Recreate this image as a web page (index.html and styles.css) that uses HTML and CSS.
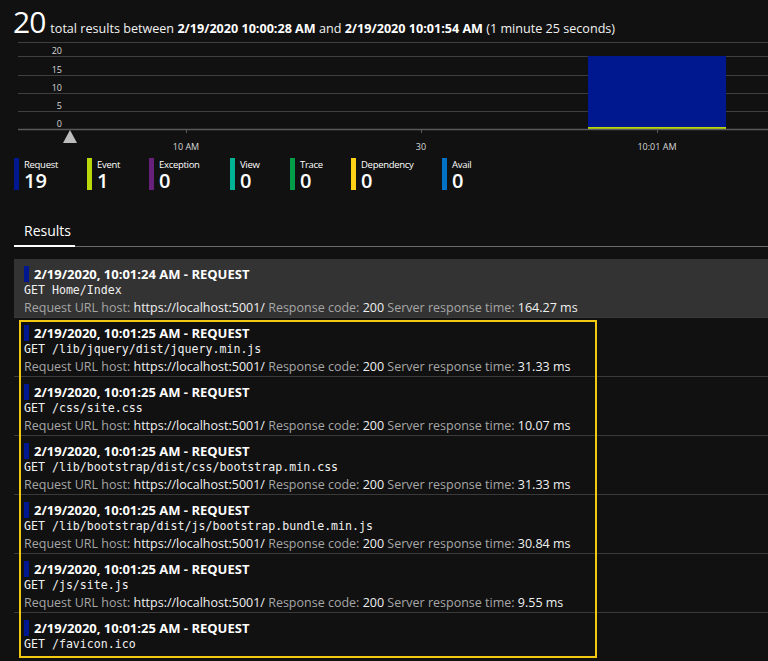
FILE: index.html
```html
<!DOCTYPE html>
<html>
<head>
<meta charset="utf-8">
<link rel="stylesheet" href="styles.css">
</head>
<body>
<div class="page">
  <header class="summary">
    <span class="summary-count">20</span>
    <span class="summary-text">total results between <b>2/19/2020 10:00:28 AM</b> and <b>2/19/2020 10:01:54 AM</b> (1 minute 25 seconds)</span>
  </header>

  <svg class="chart" width="768" height="112" viewBox="0 0 768 112">
    <g stroke="#3f3f3f" stroke-width="1">
      <line x1="18" y1="0.5" x2="768" y2="0.5"/>
      <line x1="18" y1="14.5" x2="768" y2="14.5"/>
      <line x1="18" y1="33.5" x2="768" y2="33.5"/>
      <line x1="18" y1="51.5" x2="768" y2="51.5"/>
      <line x1="18" y1="69.5" x2="768" y2="69.5"/>
    </g>
    <rect x="588" y="14" width="138" height="73" fill="#00188f"/>
    <rect x="588" y="85" width="138" height="2" fill="#bad80a"/>
    <line x1="18" y1="87.5" x2="768" y2="87.5" stroke="#5a5a5a" stroke-width="1.5"/>
    <g stroke="#5a5a5a" stroke-width="1">
      <line x1="186.5" y1="88" x2="186.5" y2="91"/>
      <line x1="421.5" y1="88" x2="421.5" y2="91"/>
      <line x1="657.5" y1="88" x2="657.5" y2="91"/>
    </g>
    <g class="axis-label" text-anchor="end">
      <text x="62" y="12">20</text>
      <text x="62" y="31">15</text>
      <text x="62" y="49">10</text>
      <text x="62" y="67">5</text>
      <text x="62" y="85">0</text>
    </g>
    <g class="axis-label" text-anchor="middle">
      <text x="186" y="108">10 AM</text>
      <text x="421" y="108">30</text>
      <text x="657" y="108">10:01 AM</text>
    </g>
    <polygon points="70,88 63,101 77,101" fill="#bdbdbd"/>
  </svg>

  <div class="legend">
    <div class="legend-item"><span class="legend-bar c-request"></span><div><div class="legend-label">Request</div><div class="legend-value">19</div></div></div>
    <div class="legend-item"><span class="legend-bar c-event"></span><div><div class="legend-label">Event</div><div class="legend-value">1</div></div></div>
    <div class="legend-item"><span class="legend-bar c-exception"></span><div><div class="legend-label">Exception</div><div class="legend-value">0</div></div></div>
    <div class="legend-item"><span class="legend-bar c-view"></span><div><div class="legend-label">View</div><div class="legend-value">0</div></div></div>
    <div class="legend-item"><span class="legend-bar c-trace"></span><div><div class="legend-label">Trace</div><div class="legend-value">0</div></div></div>
    <div class="legend-item"><span class="legend-bar c-dependency"></span><div><div class="legend-label">Dependency</div><div class="legend-value">0</div></div></div>
    <div class="legend-item"><span class="legend-bar c-avail"></span><div><div class="legend-label">Avail</div><div class="legend-value">0</div></div></div>
  </div>

  <nav class="tabs">
    <span class="tab tab-active">Results</span>
  </nav>

  <div class="results">
    <div class="result result-selected">
      <div class="result-title"><span class="result-marker"></span>2/19/2020, 10:01:24 AM - REQUEST</div>
      <div class="result-name">GET Home/Index</div>
      <div class="result-meta">Request URL host: <span class="val">https://localhost:5001/</span> Response code: <span class="val">200</span> Server response time: <span class="val">164.27 ms</span></div>
    </div>
    <div class="result">
      <div class="result-title"><span class="result-marker"></span>2/19/2020, 10:01:25 AM - REQUEST</div>
      <div class="result-name">GET /lib/jquery/dist/jquery.min.js</div>
      <div class="result-meta">Request URL host: <span class="val">https://localhost:5001/</span> Response code: <span class="val">200</span> Server response time: <span class="val">31.33 ms</span></div>
    </div>
    <div class="result">
      <div class="result-title"><span class="result-marker"></span>2/19/2020, 10:01:25 AM - REQUEST</div>
      <div class="result-name">GET /css/site.css</div>
      <div class="result-meta">Request URL host: <span class="val">https://localhost:5001/</span> Response code: <span class="val">200</span> Server response time: <span class="val">10.07 ms</span></div>
    </div>
    <div class="result">
      <div class="result-title"><span class="result-marker"></span>2/19/2020, 10:01:25 AM - REQUEST</div>
      <div class="result-name">GET /lib/bootstrap/dist/css/bootstrap.min.css</div>
      <div class="result-meta">Request URL host: <span class="val">https://localhost:5001/</span> Response code: <span class="val">200</span> Server response time: <span class="val">31.33 ms</span></div>
    </div>
    <div class="result">
      <div class="result-title"><span class="result-marker"></span>2/19/2020, 10:01:25 AM - REQUEST</div>
      <div class="result-name">GET /lib/bootstrap/dist/js/bootstrap.bundle.min.js</div>
      <div class="result-meta">Request URL host: <span class="val">https://localhost:5001/</span> Response code: <span class="val">200</span> Server response time: <span class="val">30.84 ms</span></div>
    </div>
    <div class="result">
      <div class="result-title"><span class="result-marker"></span>2/19/2020, 10:01:25 AM - REQUEST</div>
      <div class="result-name">GET /js/site.js</div>
      <div class="result-meta">Request URL host: <span class="val">https://localhost:5001/</span> Response code: <span class="val">200</span> Server response time: <span class="val">9.55 ms</span></div>
    </div>
    <div class="result">
      <div class="result-title"><span class="result-marker"></span>2/19/2020, 10:01:25 AM - REQUEST</div>
      <div class="result-name">GET /favicon.ico</div>
    </div>
    <div class="highlight"></div>
  </div>
</div>
</body>
</html>
```

FILE: styles.css
```css
html, body {
  margin: 0;
  padding: 0;
  background: #111111;
  overflow: hidden;
}

.page {
  width: 768px;
  height: 661px;
  overflow: hidden;
  font-family: "Open Sans", "Noto Sans", sans-serif;
  color: #ffffff;
}

.summary {
  height: 42px;
  padding-left: 13px;
  display: flex;
  align-items: baseline;
  gap: 5px;
  box-sizing: border-box;
  padding-top: 5px;
}

.summary-count {
  font-size: 30px;
  line-height: 34px;
  letter-spacing: -1px;
}

.summary-text {
  font-size: 12.6px;
  color: #f2f2f2;
}

.summary-text b {
  font-weight: 700;
  color: #ffffff;
}

.chart {
  display: block;
}

.axis-label text {
  font-family: "Open Sans", sans-serif;
  font-size: 9px;
  fill: #d8d8d8;
}

.legend {
  display: grid;
  grid-template-columns: 73px 62px 81px 60px 61px 91px auto;
  padding-left: 14px;
  margin-top: 4px;
  height: 32px;
}

.legend-item {
  display: flex;
  gap: 5px;
}

.legend-bar {
  width: 5px;
  height: 32px;
  flex: none;
}

.c-request { background: #00188f; }
.c-event { background: #bad80a; }
.c-exception { background: #68217a; }
.c-view { background: #00b294; }
.c-trace { background: #009e49; }
.c-dependency { background: #fcd116; }
.c-avail { background: #0072c6; }

.legend-label {
  font-size: 9.5px;
  line-height: 13px;
  letter-spacing: -0.3px;
}

.legend-value {
  font-size: 20px;
  line-height: 19px;
  font-weight: 600;
}

.tabs {
  margin-top: 31px;
  margin-left: 14px;
  border-bottom: 1px solid #6a6a6a;
  display: flex;
}

.tab {
  font-size: 14px;
  line-height: 20px;
  padding: 0 10px 4px 10px;
  width: 41px;
  margin-bottom: -1px;
}

.tab-active {
  border-bottom: 2px solid #ffffff;
}

.results {
  position: relative;
  margin-top: 12px;
  margin-left: 14px;
}

.result {
  border-bottom: 1px solid #3a3a3a;
  padding: 7px 0 0 10px;
  height: 51px;
}

.result-selected {
  background: #333333;
}

.result-title {
  display: flex;
  align-items: center;
  font-size: 13px;
  font-weight: 700;
  line-height: 16px;
  height: 16px;
}

.result-marker {
  width: 5px;
  height: 16px;
  background: #00188f;
  margin-right: 5px;
}

.result-name {
  font-family: "DejaVu Sans Mono", monospace;
  font-size: 11.6px;
  line-height: 17px;
  color: #f0f0f0;
}

.result-meta {
  font-size: 12.5px;
  line-height: 17px;
  color: #a6a6a6;
  white-space: nowrap;
}

.result-meta .val {
  color: #f0f0f0;
}

.highlight {
  position: absolute;
  left: 5px;
  top: 61px;
  width: 574px;
  height: 334px;
  border: 2px solid #f2c811;
  pointer-events: none;
}
```
